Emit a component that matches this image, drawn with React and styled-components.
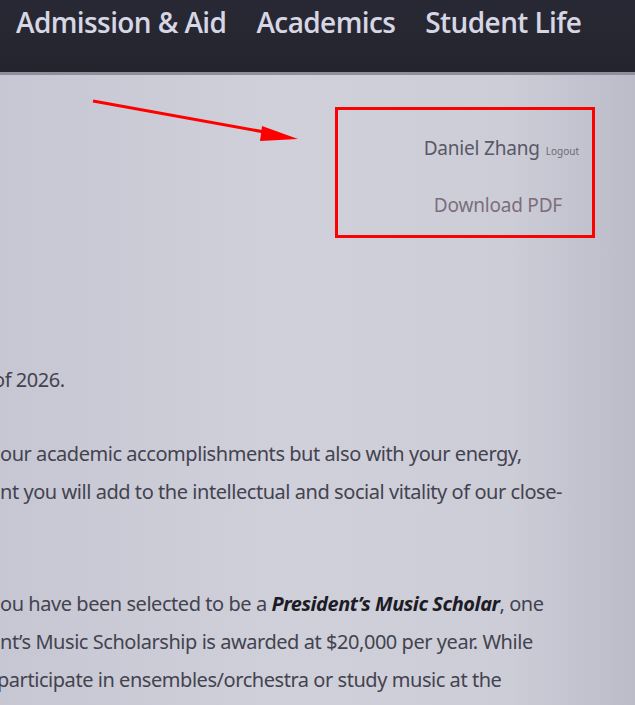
import styled, { createGlobalStyle } from 'styled-components';

const GlobalStyle = createGlobalStyle`
  html, body {
    margin: 0;
    padding: 0;
    background: #c9c9d5;
  }
  body {
    width: 635px;
    height: 705px;
    overflow: hidden;
  }
`;

const Page = styled.div`
  position: relative;
  width: 635px;
  height: 705px;
  overflow: hidden;
  font-family: 'Noto Sans', 'Open Sans', sans-serif;
  background: linear-gradient(
    90deg,
    #c7c7d3 0%,
    #d0d0db 45%,
    #cdcdd8 80%,
    #bcbcc9 100%
  );
`;

const Header = styled.header`
  height: 75px;
  display: flex;
  align-items: flex-start;
  gap: 30px;
  padding: 3px 0 0 16px;
  box-sizing: border-box;
  background: linear-gradient(180deg, #292935 0%, #24242e 100%);
  border-bottom: 3px solid #8e8e9c;
`;

const NavItem = styled.a`
  font-family: 'Open Sans', 'Noto Sans', sans-serif;
  font-weight: 600;
  font-size: 28px;
  letter-spacing: -0.6px;
  color: #d6d6e4;
  white-space: nowrap;
  text-decoration: none;
`;

const Account = styled.div`
  display: flex;
  flex-direction: column;
  align-items: flex-end;
  gap: 31px;
  padding: 60px 56px 0 0;
  height: 200px;
  box-sizing: border-box;
`;

const UserRow = styled.div`
  display: flex;
  align-items: baseline;
  gap: 6px;
  color: #585866;
`;

const UserName = styled.span`
  font-size: 19px;
  letter-spacing: -0.2px;
`;

const Logout = styled.a`
  font-size: 10px;
  color: #6a6a78;
`;

const Download = styled.a`
  font-size: 19px;
  letter-spacing: -0.2px;
  color: #7c6d7c;
  margin-right: 17px;
`;

const Letter = styled.div`
  display: flex;
  flex-direction: column;
  padding-top: 86px;
  color: #43434f;
  font-size: 20px;
  letter-spacing: -0.45px;
`;

const Paragraph = styled.div`
  display: flex;
  flex-direction: column;
  margin-bottom: ${(p) => p.$after}px;
`;

const Line = styled.div`
  height: 38px;
  line-height: 38px;
  white-space: nowrap;
  margin-left: ${(p) => p.$shift || 0}px;
`;

const Strong = styled.strong`
  font-style: italic;
  font-weight: 700;
  color: #1c1c26;
`;

const HighlightBox = styled.div`
  position: absolute;
  left: 335px;
  top: 107px;
  width: 260px;
  height: 131px;
  border: 3px solid #ff0000;
  box-sizing: border-box;
  pointer-events: none;
`;

const Arrow = styled.svg`
  position: absolute;
  left: 0;
  top: 0;
  pointer-events: none;
`;

const App = () => {
  return (
    <>
      <GlobalStyle />
      <Page>
        <Header>
          <NavItem>Admission &amp; Aid</NavItem>
          <NavItem>Academics</NavItem>
          <NavItem>Student Life</NavItem>
        </Header>
        <Account>
          <UserRow>
            <UserName>Daniel Zhang</UserName>
            <Logout>Logout</Logout>
          </UserRow>
          <Download>Download PDF</Download>
        </Account>
        <Letter>
          <Paragraph $after={36}>
            <Line $shift={-7}>of 2026.</Line>
          </Paragraph>
          <Paragraph $after={74}>
            <Line>our academic accomplishments but also with your energy,</Line>
            <Line>nt you will add to the intellectual and social vitality of our close-</Line>
          </Paragraph>
          <Paragraph $after={0}>
            <Line>
              ou have been selected to be a <Strong>President’s Music Scholar</Strong>, one
            </Line>
            <Line>nt’s Music Scholarship is awarded at $20,000 per year. While</Line>
            <Line $shift={-3}>participate in ensembles/orchestra or study music at the</Line>
          </Paragraph>
        </Letter>
        <HighlightBox />
        <Arrow width="635" height="705" viewBox="0 0 635 705">
          <line x1="93" y1="101" x2="270" y2="133" stroke="#ff0000" strokeWidth="3" />
          <polygon points="298,139 262,126 260,141" fill="#ff0000" />
        </Arrow>
      </Page>
    </>
  );
};

export default App;
